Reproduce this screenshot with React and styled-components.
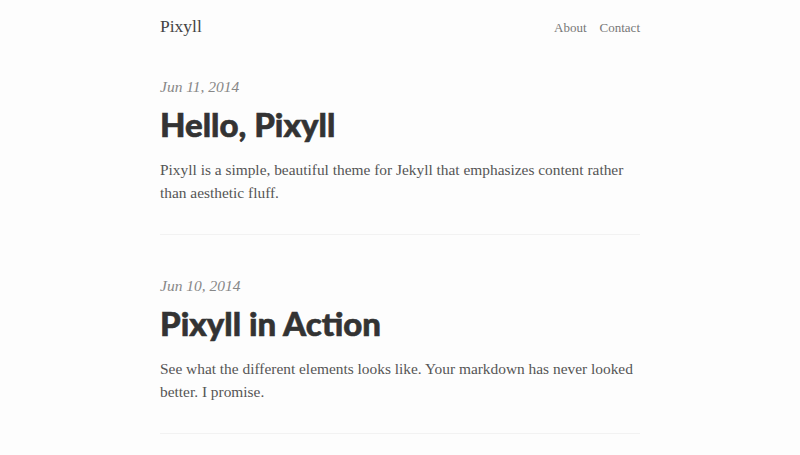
import React from "react"
import styled, { createGlobalStyle } from "styled-components"

const GlobalStyle = createGlobalStyle`
  html, body {
    margin: 0;
    padding: 0;
    background: #fdfdfd;
  }
  body {
    font-family: "Liberation Serif", "DejaVu Serif", serif;
    color: #555;
    -webkit-font-smoothing: antialiased;
  }
`

const Container = styled.div`
  width: 480px;
  margin: 0 auto;
`

const Header = styled.header`
  display: flex;
  justify-content: space-between;
  align-items: baseline;
  padding-top: 14px;
  height: 24px;
`

const SiteTitle = styled.a`
  font-size: 17.5px;
  line-height: 24px;
  color: #444;
  text-decoration: none;
`

const Nav = styled.nav`
  display: flex;
  gap: 13px;
`

const NavLink = styled.a`
  font-size: 13px;
  color: #777;
  text-decoration: none;
`

const Post = styled.article`
  padding-top: ${(p) => p.top}px;
`

const PostDate = styled.div`
  font-size: 15.5px;
  line-height: 20px;
  font-style: italic;
  color: #888;
`

// Lato black isn't always there, a thin stroke thickens the bold
const PostTitle = styled.h1`
  margin: 5px 0 0;
  font-family: Lato, "Liberation Sans", sans-serif;
  font-weight: 900;
  font-size: 33px;
  line-height: 44px;
  color: #333;
  -webkit-text-stroke: 0.6px #333;
`

const Excerpt = styled.p`
  margin: 12px 0 0;
  font-size: 15.4px;
  line-height: 23px;
  color: #555;
`

const Divider = styled.hr`
  margin: 30px 0 0;
  border: none;
  border-top: 1px solid #f2f2f2;
`

const posts = [
  {
    date: "Jun 11, 2014",
    title: "Hello, Pixyll",
    excerpt:
      "Pixyll is a simple, beautiful theme for Jekyll that emphasizes content rather than aesthetic fluff.",
  },
  {
    date: "Jun 10, 2014",
    title: "Pixyll in Action",
    excerpt:
      "See what the different elements looks like. Your markdown has never looked better. I promise.",
  },
]

export default function App() {
  return (
    <>
      <GlobalStyle />
      <Container>
        <Header>
          <SiteTitle href="#">Pixyll</SiteTitle>
          <Nav>
            <NavLink href="#">About</NavLink>
            <NavLink href="#">Contact</NavLink>
          </Nav>
        </Header>
        {posts.map((post, i) => (
          <Post key={post.title} top={i === 0 ? 39 : 41}>
            <PostDate>{post.date}</PostDate>
            <PostTitle>{post.title}</PostTitle>
            <Excerpt>{post.excerpt}</Excerpt>
            <Divider />
          </Post>
        ))}
      </Container>
    </>
  )
}
